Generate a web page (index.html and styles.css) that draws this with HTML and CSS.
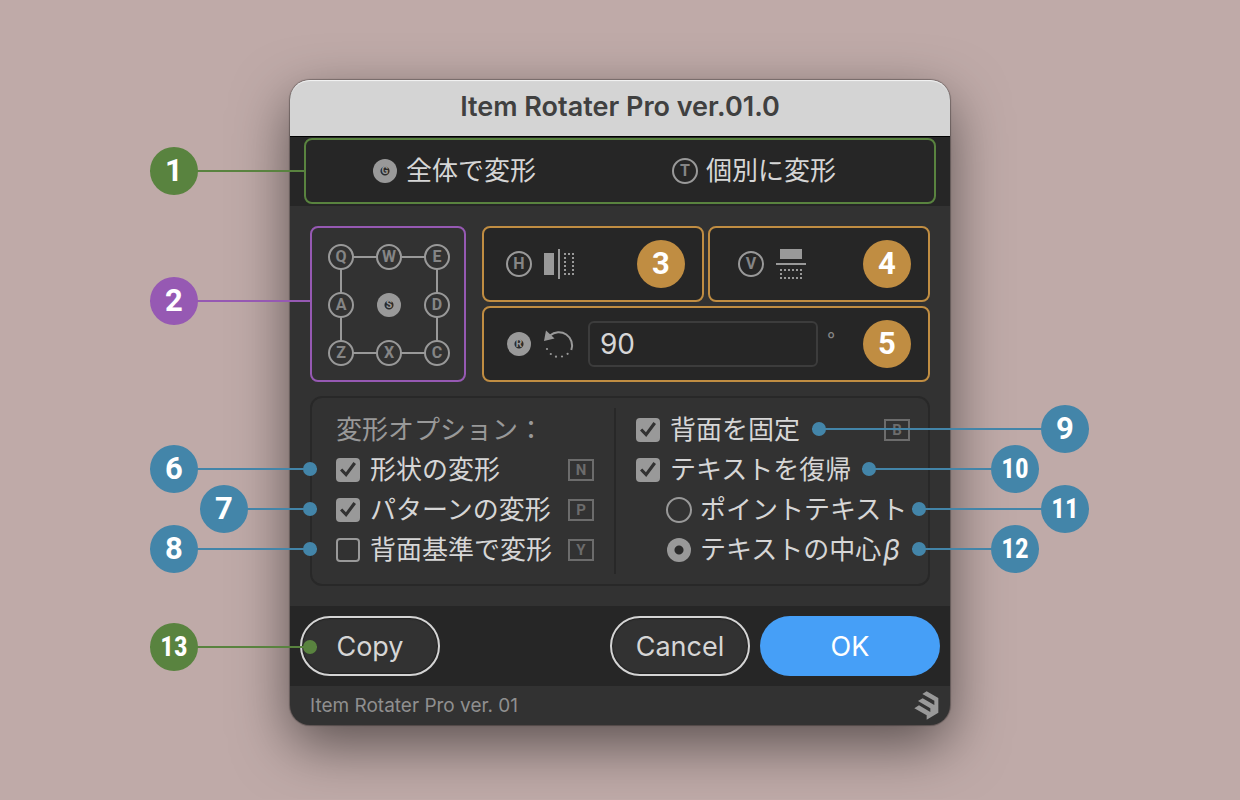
FILE: index.html
```html
<!DOCTYPE html>
<html lang="ja">
<head>
    <meta charset="UTF-8">
    <meta name="viewport" content="width=device-width, initial-scale=1.0">
    <title>Item Rotater Pro</title>
    <link rel="stylesheet" href="styles.css">
</head>
<body>
<form class="dialog">
    <h1 class="titlebar">Item Rotater Pro ver.01.0</h1>

    <div class="modes">
        <div class="modes-frame">
            <label class="mode">
                <span class="key"><input type="radio" name="mode" checked><span>G</span></span>
                全体で変形
            </label>
            <label class="mode">
                <span class="key"><input type="radio" name="mode"><span>T</span></span>
                個別に変形
            </label>
            <div class="callout left green to-modes"><b class="badge">1</b></div>
        </div>
    </div>

    <div class="main">
        <div class="transform">
            <div class="anchor">
                <div class="anchor-grid">
                    <label class="key"><input type="radio" name="anchor"><span>Q</span></label>
                    <label class="key"><input type="radio" name="anchor"><span>W</span></label>
                    <label class="key"><input type="radio" name="anchor"><span>E</span></label>
                    <label class="key"><input type="radio" name="anchor"><span>A</span></label>
                    <label class="key"><input type="radio" name="anchor" checked><span>S</span></label>
                    <label class="key"><input type="radio" name="anchor"><span>D</span></label>
                    <label class="key"><input type="radio" name="anchor"><span>Z</span></label>
                    <label class="key"><input type="radio" name="anchor"><span>X</span></label>
                    <label class="key"><input type="radio" name="anchor"><span>C</span></label>
                </div>
                <div class="callout left purple to-anchor"><b class="badge">2</b></div>
            </div>

            <div class="actions">
                <div class="action">
                    <label class="action-label">
                        <span class="key"><input type="radio" name="action"><span>H</span></span>
                        <svg width="30" height="30" viewBox="0 0 30 30" role="img" aria-label="左右反転">
                            <path class="fill" d="M0 4h10v22H0zM14 0h2v30h-2z"/>
                            <path class="dots" d="M20 5h10M20 25h10"/>
                            <path class="dots" d="M21 8v16M29 8v16"/>
                        </svg>
                    </label>
                    <b class="badge orange">3</b>
                </div>
                <div class="action vertical">
                    <label class="action-label">
                        <span class="key"><input type="radio" name="action"><span>V</span></span>
                        <svg width="30" height="30" viewBox="0 0 30 30" role="img" aria-label="上下反転">
                            <path class="fill" d="M4 0h22v10H4zM0 14h30v2H0z"/>
                            <path class="dots" d="M4 21h22M4 29h22"/>
                            <path class="dots" d="M5 24v4M25 24v4"/>
                        </svg>
                    </label>
                    <b class="badge orange">4</b>
                </div>
                <div class="action rotate">
                    <label class="action-label">
                        <span class="key"><input type="radio" name="action" checked><span>R</span></span>
                        <svg width="30" height="30" viewBox="0 0 30 30" role="img" aria-label="回転">
                            <path class="arc" d="M6 6.5A13.3 13.3 0 0 1 27.3 21"/>
                            <path class="fill" d="M2 1.5 10.5 9.5 0 12z"/>
                            <g class="fill">
                                <circle cx="3" cy="20" r="1.1"/>
                                <circle cx="6.8" cy="25" r="1.1"/>
                                <circle cx="12" cy="27.7" r="1.1"/>
                                <circle cx="18" cy="27.5" r="1.1"/>
                                <circle cx="23.6" cy="24.8" r="1.1"/>
                            </g>
                        </svg>
                    </label>
                    <input class="angle" type="text" value="90" aria-label="角度">
                    <span class="degree">°</span>
                    <b class="badge orange">5</b>
                </div>
            </div>
        </div>

        <div class="options">
            <div class="column">
                <h2 class="row">変形オプション：</h2>
                <div class="row">
                    <label><input type="checkbox" checked>形状の変形</label>
                    <kbd>N</kbd>
                    <div class="callout left blue"><b class="badge">6</b><i class="dot"></i></div>
                </div>
                <div class="row">
                    <label><input type="checkbox" checked>パターンの変形</label>
                    <kbd>P</kbd>
                    <div class="callout left blue short"><b class="badge">7</b><i class="dot"></i></div>
                </div>
                <div class="row">
                    <label><input type="checkbox">背面基準で変形</label>
                    <kbd>Y</kbd>
                    <div class="callout left blue"><b class="badge">8</b><i class="dot"></i></div>
                </div>
            </div>
            <div class="column">
                <div class="row">
                    <label><input type="checkbox" checked>背面を固定</label>
                    <kbd>B</kbd>
                    <div class="callout right blue to-back"><i class="dot"></i><b class="badge">9</b></div>
                </div>
                <div class="row">
                    <label><input type="checkbox" checked>テキストを復帰</label>
                    <div class="callout right blue to-text"><i class="dot"></i><b class="badge two">10</b></div>
                </div>
                <div class="row sub">
                    <label><span class="key"><input type="radio" name="text"></span>ポイントテキスト</label>
                    <div class="callout right blue to-point"><i class="dot"></i><b class="badge two">11</b></div>
                </div>
                <div class="row sub">
                    <label><span class="key"><input type="radio" name="text" checked></span>テキストの中心<em>β</em></label>
                    <div class="callout right blue to-center"><i class="dot"></i><b class="badge two">12</b></div>
                </div>
            </div>
        </div>
    </div>

    <div class="buttons">
        <button class="btn copy" type="button">Copy</button>
        <button class="btn" type="button">Cancel</button>
        <button class="btn ok" type="button">OK</button>
        <div class="callout left green to-copy"><b class="badge two">13</b><i class="dot"></i></div>
    </div>

    <div class="status">
        <span>Item Rotater Pro ver. 01</span>
        <svg width="25" height="29" viewBox="941 289 75 87" role="img" aria-label="Logo">
            <path d="M966 298 979 290 1014 310V354L979 375V362L942 341 956 332 990 352V341L953 319 967 311 1002 331V318Z"/>
        </svg>
    </div>
</form>
</body>
</html>
```

FILE: styles.css
```css
* {
    box-sizing: border-box;
}

body {
    margin: 0;
    padding: 80px 20px 74px;
    background-color: #bfaaa8;
    color: #d6d6d6;
    font-family: Inter, "Noto Sans CJK JP", sans-serif;
    font-size: 26px;
    line-height: 40px;
}

.dialog {
    max-width: 660px;
    margin: 0 auto;
    background-color: #323232;
    border-radius: 20px;
    box-shadow: 0 0 1px 1px rgba(0, 0, 0, 0.3), 0 20px 56px rgba(0, 0, 0, 0.52);
}

.titlebar {
    margin: 0;
    height: 56px;
    line-height: 54px;
    background-color: #d4d4d4;
    border-radius: 20px 20px 0 0;
    box-shadow: inset 0 2px 1px -1px #f4f4f4;
    color: #404040;
    font-size: 27px;
    font-weight: 600;
    text-align: center;
}

.modes {
    padding: 1px 14px 2px;
    background-color: #262626;
    border-top: 1px solid #000;
}

.modes-frame {
    position: relative;
    display: flex;
    align-items: center;
    gap: 136px;
    height: 66px;
    padding-left: 66px;
    border: 2px solid #59833f;
    border-radius: 8px;
}

.mode {
    display: flex;
    align-items: center;
    gap: 8px;
    white-space: nowrap;
}

/* round key: the radio with its shortcut letter on top */
.key {
    display: inline-grid;
    flex: none;
    width: 26px;
    height: 26px;
    place-items: center;
}

.key > * {
    grid-area: 1 / 1;
}

.key span {
    color: #858585;
    font-family: Roboto, sans-serif;
    font-size: 16px;
    font-weight: 700;
    line-height: 26px;
    pointer-events: none;
}

.key input {
    appearance: none;
    width: 26px;
    height: 26px;
    margin: 0;
    border: 2px solid #999;
    border-radius: 50%;
}

.key input:checked {
    width: 24px;
    height: 24px;
    border: none;
    background: radial-gradient(circle, #2b2b2b 4px, #999 5px);
}

.key input:checked + span {
    color: #999;
    font-size: 10px;
}

.main {
    padding: 20px;
}

.transform {
    display: flex;
    gap: 16px;
}

.anchor {
    position: relative;
    padding: 16px 14px 14px 16px;
    border: 2px solid #9659b3;
    border-radius: 8px;
}

.anchor-grid {
    position: relative;
    display: grid;
    grid-template-columns: repeat(3, 26px);
    gap: 22px;
}

.anchor-grid::before {
    content: "";
    position: absolute;
    inset: 12px;
    border: 2px solid #999;
}

.anchor-grid .key {
    z-index: 1;
}

.anchor-grid input:not(:checked) {
    background-color: #323232;
}

.actions {
    flex: 1;
    display: grid;
    grid-template-columns: 1fr 1fr;
    gap: 4px;
}

.action {
    display: flex;
    align-items: center;
    height: 76px;
    padding: 0 17px 0 22px;
    background-color: #262626;
    border: 2px solid #c08d42;
    border-radius: 8px;
}

.action.vertical {
    padding-left: 28px;
}

.action.rotate {
    grid-column: 1 / 3;
}

.action-label {
    display: flex;
    gap: 12px;
    align-items: center;
}

.action .badge {
    margin-left: auto;
}

.fill {
    fill: #999;
}

.dots {
    fill: none;
    stroke: #999;
    stroke-width: 2;
    stroke-dasharray: 2 2;
}

.arc {
    fill: none;
    stroke: #999;
    stroke-width: 2;
}

.angle {
    flex: 0 1 230px;
    min-width: 0;
    height: 46px;
    margin-left: 14px;
    padding: 0 10px;
    background-color: #262626;
    border: 2px solid #3c3c3c;
    border-radius: 6px;
    color: #d6d6d6;
    font: 400 28px Inter, sans-serif;
}

.degree {
    margin-left: 9px;
    color: #858585;
    font-size: 18px;
    line-height: 32px;
    align-self: flex-start;
    padding-top: 16px;
}

.options {
    display: grid;
    grid-template-columns: 38fr 39fr;
    margin-top: 14px;
    padding: 10px 0;
    border: 2px solid #282828;
    border-radius: 12px;
}

.column {
    padding: 2px 18px 4px 20px;
}

.column:first-child {
    padding: 2px 20px 4px 24px;
    border-right: 2px solid #282828;
}

.row {
    position: relative;
    display: flex;
    align-items: center;
    justify-content: space-between;
    height: 40px;
    margin: 0;
    white-space: nowrap;
}

h2.row {
    color: #999;
    font-size: 26px;
    font-weight: 400;
}

.row.sub {
    padding-left: 30px;
}

.row label {
    display: flex;
    align-items: center;
}

.row em {
    margin-left: 2px;
    font-size: 28px;
}

.row .key {
    margin-right: 8px;
}

.row input[type="checkbox"] {
    appearance: none;
    display: grid;
    place-items: center;
    width: 24px;
    height: 24px;
    margin: 0 10px 0 0;
    border: 2px solid #999;
    border-radius: 4px;
}

.row input[type="checkbox"]:checked {
    background-color: #999;
}

.row input[type="checkbox"]:checked::before {
    content: "";
    width: 16px;
    height: 16px;
    background-color: #323232;
    clip-path: polygon(0 53%, 14% 40%, 37% 64%, 84% 0, 100% 12%, 39% 94%);
}

kbd {
    width: 26px;
    height: 22px;
    border: 2px solid #6c6c6c;
    color: #6c6c6c;
    font-family: Roboto, sans-serif;
    font-size: 15px;
    font-weight: 700;
    line-height: 18px;
    text-align: center;
}

.buttons {
    position: relative;
    display: flex;
    gap: 10px;
    padding: 10px;
    background-color: #262626;
}

.btn {
    width: 140px;
    height: 60px;
    padding: 0;
    background-color: #323232;
    border: 2px solid #d4d4d4;
    border-radius: 30px;
    box-shadow: inset 0 0 1px 1px #222;
    color: #d6d6d6;
    font: 400 27px Inter, sans-serif;
}

.btn.copy {
    margin-right: auto;
}

.btn.ok {
    width: 180px;
    background-color: #469ff7;
    border: none;
    box-shadow: none;
    color: #fff;
}

.status {
    display: flex;
    align-items: center;
    justify-content: space-between;
    height: 39px;
    padding: 0 11px 0 20px;
    color: #8f8f8f;
    font-size: 19px;
}

.status svg {
    fill: #999;
}

/* numbered callouts: badge, leader line, optional dot */
.badge {
    flex: none;
    width: 48px;
    height: 48px;
    border-radius: 50%;
    color: #fff;
    font-family: Roboto, sans-serif;
    font-size: 31px;
    font-weight: 700;
    line-height: 48px;
    text-align: center;
}

.badge.two {
    font-family: "Roboto Condensed", "Open Sans Condensed", Roboto, sans-serif;
    font-size: 27px;
}

.dot {
    width: 14px;
    height: 14px;
    border-radius: 50%;
}

.callout {
    position: absolute;
    z-index: 2;
    top: -5px;
    display: flex;
    align-items: center;
    justify-content: space-between;
    height: 48px;
    background: linear-gradient(currentColor, currentColor) center / 100% 2px no-repeat;
}

/* the leader line must not show outside the round badge */
.callout .badge {
    position: relative;
}

.left {
    right: calc(100% + 19px);
    width: 167px;
}

.left.short {
    width: 117px;
}

.to-modes {
    top: 7px;
    right: 100%;
    width: 156px;
}

.to-anchor {
    top: 49px;
    right: 100%;
    width: 162px;
}

.to-copy {
    top: 17px;
    right: calc(100% - 27px);
}

.to-back {
    left: 176px;
    width: 277px;
}

.to-text {
    left: 226px;
    width: 177px;
}

.to-point {
    left: 276px;
    width: 177px;
}

.to-center {
    left: 276px;
    width: 127px;
}

.green {
    color: #59833f;
}

.purple {
    color: #9659b3;
}

.blue {
    color: #4385a9;
}

.green .badge,
.green .dot {
    background-color: #59833f;
}

.purple .badge {
    background-color: #9659b3;
}

.blue .badge,
.blue .dot {
    background-color: #4385a9;
}

.badge.orange {
    background-color: #c08d42;
}
```
